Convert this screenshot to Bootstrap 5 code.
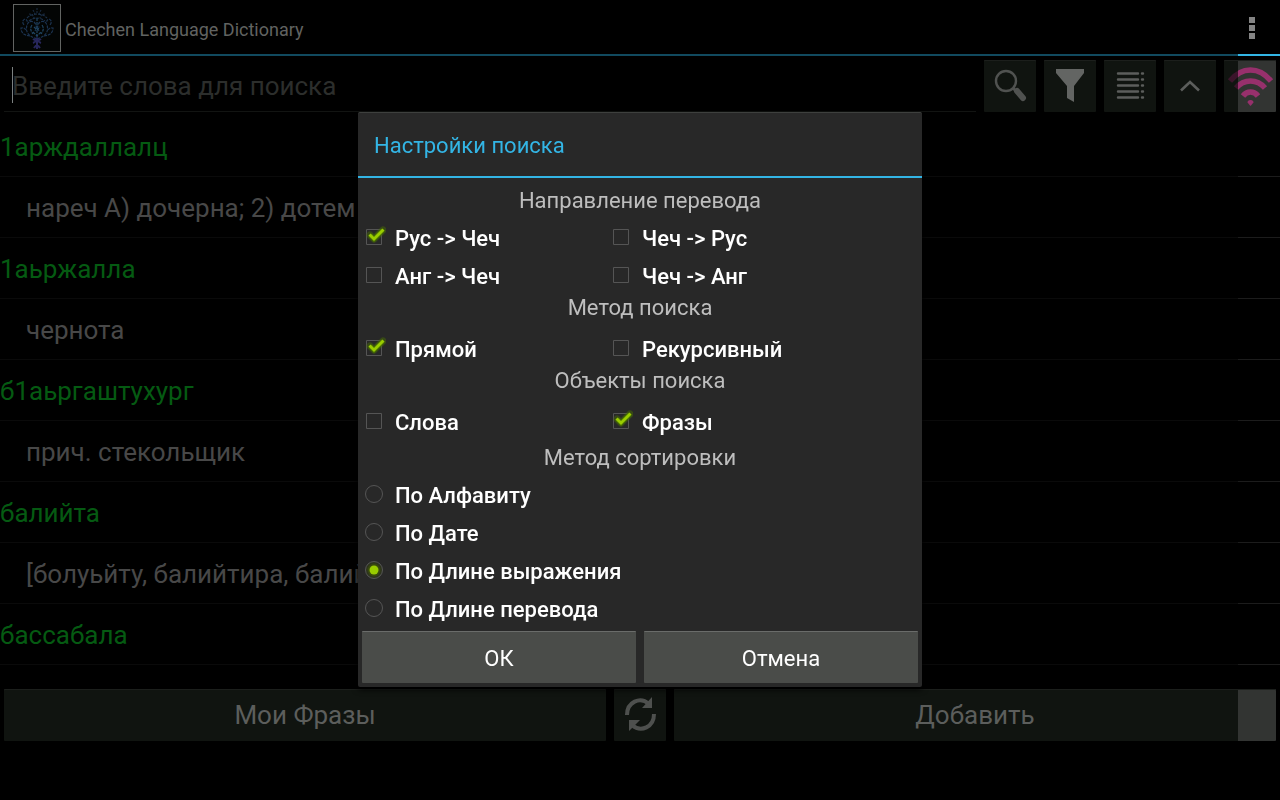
<!DOCTYPE html>
<html lang="ru">
<head>
<meta charset="utf-8">
<meta name="viewport" content="width=device-width, initial-scale=1">
<title>Chechen Language Dictionary</title>
<link href="https://cdn.jsdelivr.net/npm/bootstrap@5.3.0/dist/css/bootstrap.min.css" rel="stylesheet">
<style>
:root { --edge: calc(100% - 42px); }
body { background: #000; color: #5c5e5c; font-family: Roboto, sans-serif; }
.app-bar { height: 56px; padding: 0 12px 0 13px; background: linear-gradient(to right, #114a5f var(--edge), #33b5e5 0) bottom / 100% 2px no-repeat; }
.app-icon { border: 1px solid #626462; background: #030504; }
.app-name { font-size: 18px; line-height: 24px; color: #616361; margin: 0 4px; }
.menu-btn { width: 32px; height: 48px; }
.tool-row { padding: 4px; }
.query { min-width: 0; height: 52px; border: 0; border-bottom: 1px solid #121412; border-radius: 0; background: transparent; color: #5c5e5c; font-size: 26px; padding: 0 8px; outline: 0; }
.query::placeholder { color: #2c2e2c; opacity: 1; }
.caret-line { position: absolute; left: 8px; top: 7px; width: 1px; height: 36px; background: #7b8080; }
.tile { height: 52px; border: 0; border-radius: 1px; background: #101410; box-shadow: inset 0 1px #1c1f1c; color: #5c5e5c; font-size: 26px; line-height: 32px; padding: 0; }
.tile-sq { width: 52px; flex: none; }
.tile-lit { background: linear-gradient(to right, #101410 calc(100% - 38px), #323432 0); }
.entry { height: 61px; font-size: 26px; line-height: 62px; white-space: nowrap; overflow: hidden; background: linear-gradient(to right, #0a0a0a var(--edge), #1c1c1c 0) bottom / 100% 1px no-repeat; }
.word { color: #055a12; }
.meaning { color: #484848; padding-left: 26px; }
.bottom-row { padding: 4px; }
.system-space { height: 55px; }
.scrim { position: fixed; inset: 0; padding-bottom: 1px; }
.dialog-box { width: 564px; max-width: 100%; background: #282828; border-top: 1px solid #3e403e; border-radius: 2px; color: #fff; box-shadow: 0 2px 6px #000; }
.dialog-title { height: 65px; margin: 0; padding: 0 16px; font-size: 22px; line-height: 65px; font-weight: 400; color: #33b5e5; border-bottom: 2px solid #33b5e5; }
.group { border: 0; margin: 0; padding: 0 4px; min-width: 0; }
.group-name { float: none; width: 100%; margin: 0; font-size: 22px; line-height: 27px; text-align: center; color: #bebebe; }
.group-name-first { padding-top: 9px; }
.choice { height: 38px; font-size: 22px; line-height: 28px; font-weight: 500; }
.choice-half { width: 247px; }
.choice label { padding: 4px 0 0 9px; }
.choice input { appearance: none; width: 24px; height: 24px; margin: 0; flex: none; background: center / 24px 24px no-repeat; }
.choice input[type=checkbox] { background-image: url("data:image/svg+xml,%3Csvg xmlns='http://www.w3.org/2000/svg' viewBox='0 0 24 24'%3E%3Cpath d='M4.500 4.500h15v15h-15z' fill='none' stroke='%23555'/%3E%3C/svg%3E"); }
.choice input[type=checkbox]:checked { background-image: url("data:image/svg+xml,%3Csvg xmlns='http://www.w3.org/2000/svg' viewBox='0 0 24 24'%3E%3Cpath d='M4.500 4.500h15v15h-15z' fill='none' stroke='%23555'/%3E%3Cg fill='none'%3E%3Cpath d='M8 10l4 4 9-9' stroke='%23497000' stroke-opacity='.45' stroke-width='7' stroke-linejoin='round' stroke-linecap='round'/%3E%3Cpath d='M8 10l4 4 9-9' stroke='%23497000' stroke-opacity='.8' stroke-width='5'/%3E%3Cpath d='M7.500 9.500l4.500 4.500 9.500-9.500' stroke='%2399cc00' stroke-width='3'/%3E%3C/g%3E%3C/svg%3E"); }
.choice input[type=radio] { background-image: url("data:image/svg+xml,%3Csvg xmlns='http://www.w3.org/2000/svg' viewBox='0 0 24 24'%3E%3Ccircle cx='12' cy='12' r='8.500' fill='none' stroke='%23555'/%3E%3C/svg%3E"); }
.choice input[type=radio]:checked { background-image: url("data:image/svg+xml,%3Csvg xmlns='http://www.w3.org/2000/svg' viewBox='0 0 24 24'%3E%3Ccircle cx='12' cy='12' r='8.500' fill='%232e341e' stroke='%23555'/%3E%3Ccircle cx='12' cy='12' r='6.500' fill='%2338480f'/%3E%3Ccircle cx='12' cy='12' r='4.500' fill='%2399cc00'/%3E%3C/svg%3E"); }
.dialog-actions { padding: 4px; }
.dialog-btn { height: 52px; border: 0; border-top: 1px solid #6a6c6a; border-radius: 1px; background: #4a4c49; color: #fff; font-size: 22px; line-height: 28px; padding: 2px 0 0; }
</style>
</head>
<body>
<div class="d-flex flex-column min-vh-100">
  <header class="app-bar d-flex align-items-center">
    <svg class="app-icon flex-shrink-0" width="48" height="48" viewBox="0 0 46 46" fill="none" stroke="#1b3350" stroke-width="1.200" aria-hidden="true">
      <path d="M23 3v5M19 5l2 4M27 5l-2 4M15 9q4 0 5 4M31 9q-4 0-5 4" stroke="#18283c" stroke-dasharray="2 1"/>
      <path d="M13 13q4-4 10-4t10 4M15 16q4-3 8-3t8 3" stroke="#1b3048" stroke-dasharray="3 1"/>
      <path d="M23 34Q10 30 13 20q2-5 7-3 4 4 1 9M23 34q13-4 10-14-2-5-7-3-4 4-1 9" stroke-dasharray="3 1"/>
      <path d="M16 31Q7 30 7 23q4-1 5 3M30 31q9-1 9-8-4-1-5 3M10 20q-3-4 1-6 3 1 2 4M36 20q3-4-1-6-3 1-2 4" stroke-dasharray="3 1"/>
      <path d="M18 20q-3 4 1 9M28 20q3 4-1 9M23 13v19M20 22l3 3 3-3M19 27l4 4 4-4" stroke="#1f4562" stroke-dasharray="3 1"/>
      <path d="M19 34q4 3 8 0M19 38q3-1 4-4 1 3 4 4M23 36v8M20 43q3-5 6 0" stroke="#27265a" stroke-width="2"/>
    </svg>
    <h1 class="app-name fw-normal pt-1">Chechen Language Dictionary</h1>
    <button class="btn menu-btn border-0 p-0 ms-auto" type="button" aria-label="Меню">
      <svg class="d-block mx-auto" width="6" height="22" viewBox="0 0 6 22" fill="#848484"><path d="M0 0h6v6H0zM0 8h6v6H0zM0 16h6v6H0z"/></svg>
    </button>
  </header>

  <div class="tool-row d-flex gap-2">
    <div class="position-relative flex-grow-1">
      <input class="query w-100" type="text" placeholder="Введите слова для поиска" aria-label="Введите слова для поиска">
      <span class="caret-line"></span>
    </div>
    <button class="btn tile tile-sq" type="button" aria-label="Поиск">
      <svg class="d-block" width="52" height="52" viewBox="0 0 52 52" fill="none" stroke="#505250"><circle cx="22" cy="21" r="10" stroke-width="2.400"/><path d="M29 28l4 4" stroke-width="3"/><path d="M33 31l6 7" stroke-width="6" stroke-linecap="round"/></svg>
    </button>
    <button class="btn tile tile-sq" type="button" aria-label="Фильтр">
      <svg class="d-block" width="52" height="52" viewBox="0 0 52 52" fill="#636563"><path d="M12 9h28v4L30 26v16l-7-4V26L12 13z"/></svg>
    </button>
    <button class="btn tile tile-sq" type="button" aria-label="Список">
      <svg class="d-block" width="52" height="52" viewBox="0 0 52 52" stroke="#5c5e5c" stroke-width="2.400" stroke-linecap="round"><path d="M14 13.500h20M14 19.500h20M14 25.500h20M14 31.500h20M14 37.500h20M38 13.500h1M38 19.500h1M38 25.500h1M38 31.500h1M38 37.500h1"/></svg>
    </button>
    <button class="btn tile tile-sq" type="button" aria-label="Свернуть">
      <svg class="d-block" width="52" height="52" viewBox="0 0 52 52" fill="none" stroke="#5c5e5c" stroke-width="2.600"><path d="M17 30.500l9-8.500 9 8.500"/></svg>
    </button>
    <button class="btn tile tile-sq tile-lit" type="button" aria-label="Сеть">
      <svg class="d-block" width="52" height="52" viewBox="0 0 52 52" fill="none" stroke="url(#signal)" stroke-width="5.500">
        <defs><linearGradient id="signal" gradientUnits="userSpaceOnUse" x1="0" x2="52" y1="0" y2="0"><stop offset="0.269" stop-color="#3b142b"/><stop offset="0.269" stop-color="#97306c"/></linearGradient></defs>
        <path d="M6 21Q15 10 26.500 10T47 21M12 28Q18 21 26.500 21T41 28M19 36Q22 32 26.500 32T34 36"/>
        <path d="M23.500 42.500a3 2.500 0 0 1 6 0l-3 3.500z" fill="url(#signal)" stroke="none"/>
      </svg>
    </button>
  </div>

  <main class="flex-grow-1">
    <div class="entry word">1арждаллалц</div>
    <div class="entry meaning">нареч А) дочерна; 2) дотем</div>
    <div class="entry word">1аьржалла</div>
    <div class="entry meaning">чернота</div>
    <div class="entry word">б1аьргаштухург</div>
    <div class="entry meaning">прич. стекольщик</div>
    <div class="entry word">балийта</div>
    <div class="entry meaning">[болуьйту, балийтира, балий</div>
    <div class="entry word">бассабала</div>
  </main>

  <div class="bottom-row d-flex gap-2">
    <button class="btn tile flex-fill w-50" type="button">Мои Фразы</button>
    <button class="btn tile tile-sq" type="button" aria-label="Обновить">
      <svg class="d-block" width="52" height="52" viewBox="0 0 52 52" fill="none" stroke="#4e504e" stroke-width="4"><path d="M13 26C13 13 26 7 35 15M40 25C40 38 27 44 18 36"/><path d="M38 8v11H28zM15 42V31h11z" fill="#4e504e" stroke="none"/></svg>
    </button>
    <button class="btn tile tile-lit flex-fill w-50" type="button">Добавить</button>
  </div>
  <div class="system-space"></div>
</div>

<div class="scrim d-flex align-items-center justify-content-center">
  <form class="dialog-box" role="dialog" aria-labelledby="dlg-title">
    <h2 class="dialog-title" id="dlg-title">Настройки поиска</h2>
    <fieldset class="group">
      <legend class="group-name group-name-first mb-1">Направление перевода</legend>
      <div class="d-flex flex-wrap">
        <div class="choice choice-half d-flex align-items-center"><input type="checkbox" id="ru-ce" checked><label for="ru-ce">Рус -&gt; Чеч</label></div>
        <div class="choice choice-half d-flex align-items-center"><input type="checkbox" id="ce-ru"><label for="ce-ru">Чеч -&gt; Рус</label></div>
        <div class="choice choice-half d-flex align-items-center"><input type="checkbox" id="en-ce"><label for="en-ce">Анг -&gt; Чеч</label></div>
        <div class="choice choice-half d-flex align-items-center"><input type="checkbox" id="ce-en"><label for="ce-en">Чеч -&gt; Анг</label></div>
      </div>
    </fieldset>
    <fieldset class="group">
      <legend class="group-name mb-2">Метод поиска</legend>
      <div class="d-flex flex-wrap">
        <div class="choice choice-half d-flex align-items-center"><input type="checkbox" id="direct" checked><label for="direct">Прямой</label></div>
        <div class="choice choice-half d-flex align-items-center"><input type="checkbox" id="recursive"><label for="recursive">Рекурсивный</label></div>
      </div>
    </fieldset>
    <fieldset class="group">
      <legend class="group-name mb-2">Объекты поиска</legend>
      <div class="d-flex flex-wrap">
        <div class="choice choice-half d-flex align-items-center"><input type="checkbox" id="words"><label for="words">Слова</label></div>
        <div class="choice choice-half d-flex align-items-center"><input type="checkbox" id="phrases" checked><label for="phrases">Фразы</label></div>
      </div>
    </fieldset>
    <fieldset class="group">
      <legend class="group-name pt-1 mb-1">Метод сортировки</legend>
      <div class="choice d-flex align-items-center"><input type="radio" name="sort" id="by-alpha"><label for="by-alpha">По Алфавиту</label></div>
      <div class="choice d-flex align-items-center"><input type="radio" name="sort" id="by-date"><label for="by-date">По Дате</label></div>
      <div class="choice d-flex align-items-center"><input type="radio" name="sort" id="by-phrase" checked><label for="by-phrase">По Длине выражения</label></div>
      <div class="choice d-flex align-items-center"><input type="radio" name="sort" id="by-translation"><label for="by-translation">По Длине перевода</label></div>
    </fieldset>
    <div class="dialog-actions d-flex gap-2">
      <button class="btn dialog-btn flex-fill w-50" type="button">ОК</button>
      <button class="btn dialog-btn flex-fill w-50" type="button">Отмена</button>
    </div>
  </form>
</div>
<script src="https://cdn.jsdelivr.net/npm/bootstrap@5.3.0/dist/js/bootstrap.bundle.min.js"></script>
</body>
</html>
